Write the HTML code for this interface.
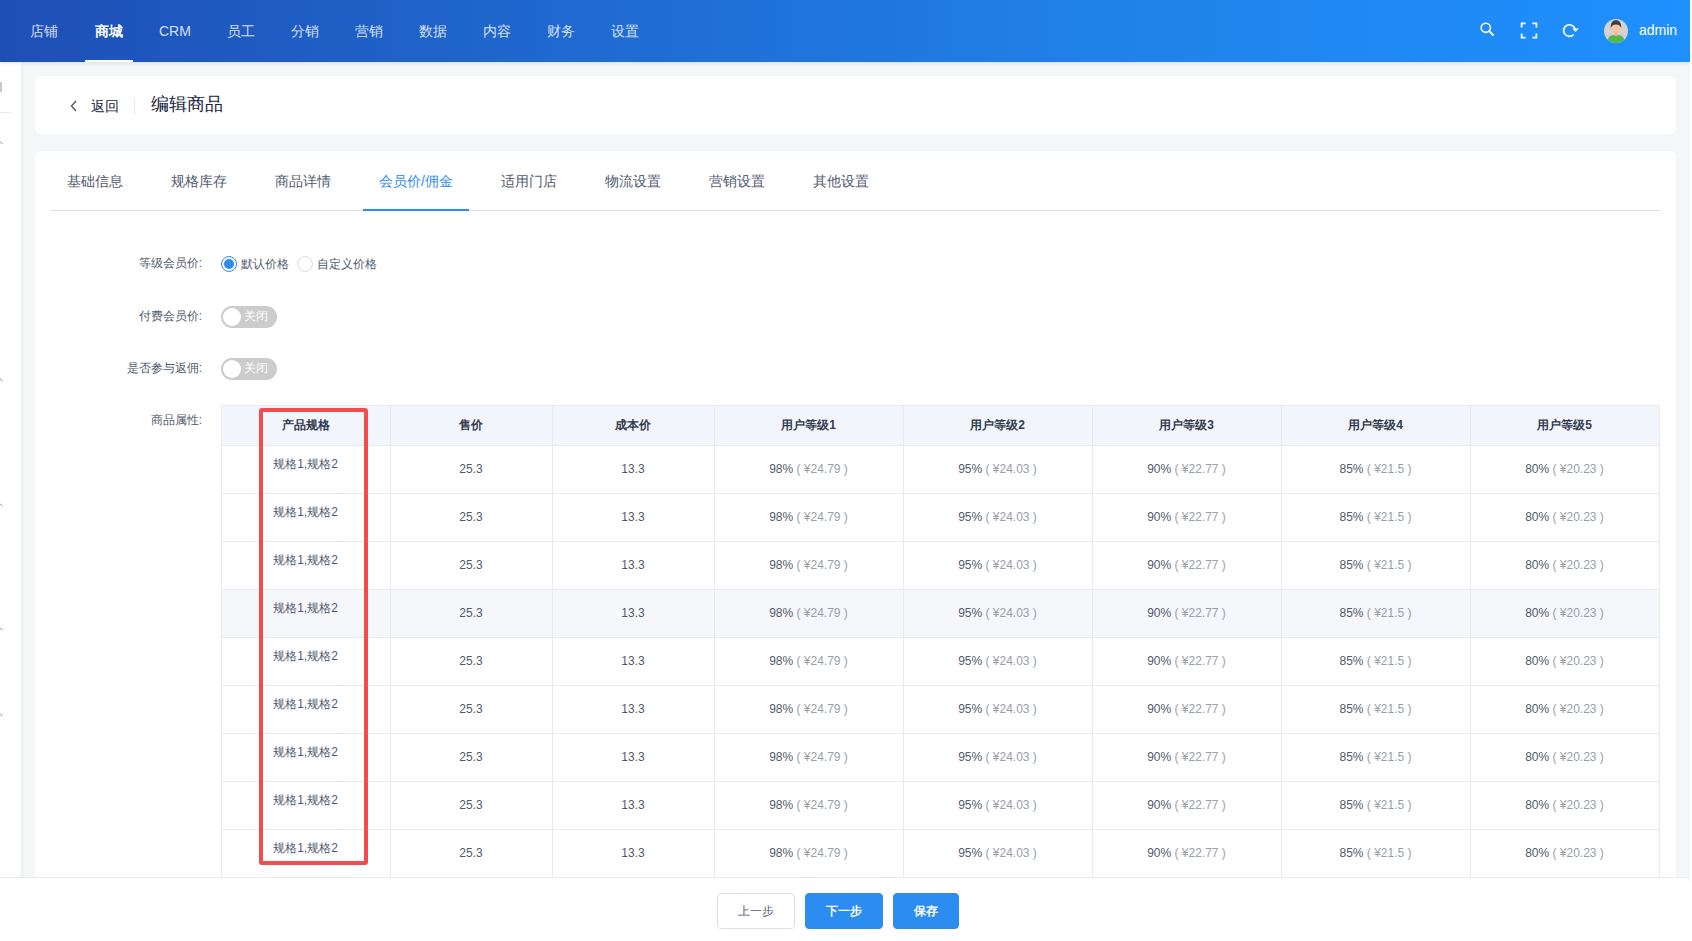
<!DOCTYPE html>
<html><head><meta charset="utf-8">
<style>
*{box-sizing:border-box;margin:0;padding:0}
html,body{width:1692px;height:941px;overflow:hidden;background:#fff;font-family:"Liberation Sans",sans-serif;color:#515a6e}
.abs{position:absolute}
#page{position:absolute;left:0;top:0;width:1690px;height:941px;background:#f5f6f8;overflow:hidden}
#hdr{position:absolute;left:0;top:0;width:1690px;height:62px;background:linear-gradient(90deg,#1e4fb6 0%,#2082e9 66%,#1e90ff 100%);box-shadow:0 1px 4px rgba(0,21,41,.12)}
.nav{position:absolute;top:0;height:62px;line-height:62px;font-size:14px;color:rgba(255,255,255,.82)}
.nav.on{color:#fff;font-weight:bold}
#uline{position:absolute;left:85px;top:60px;width:48px;height:2px;background:#fff}
#side{position:absolute;left:0;top:62px;width:21px;height:879px;background:#fff;box-shadow:1px 0 4px rgba(0,21,41,.06)}
.card{position:absolute;background:#fff;border-radius:6px}
#footer{position:absolute;left:0;top:877px;width:1690px;height:64px;background:#fff;border-top:1px solid #e8eaec;border-top-right-radius:6px}
.btn{position:absolute;top:893px;height:36px;line-height:34px;font-size:12px;font-weight:bold;text-align:center;border-radius:4px;border:1px solid #2d8cf0;background:#2d8cf0;color:#fff}
.btn.def{background:#fff;border-color:#dcdee2;color:#515a6e;font-weight:normal}
.tab{position:absolute;top:151px;height:60px;line-height:60px;font-size:14px;color:#515a6e}
.tab.on{color:#2d8cf0}
.lbl{position:absolute;font-size:12px;color:#515a6e;text-align:right;width:200px;left:2px}
.thead{background:#f2f6fc}
.hov{background:#f5f7fa}
.hl{height:1px;background:#e8eaf0}
.vl{width:1px;background:#e8eaf0}
.th{height:40px;line-height:40px;text-align:center;font-size:12px;font-weight:bold;color:#333a4d}
.td{height:48px;line-height:48px;text-align:center;font-size:12px;color:#515a6e;white-space:nowrap}
.td.sku{line-height:39px}
.g{color:#9a9ea8}
.sw{position:absolute;left:221px;width:56px;height:22px;border-radius:11px;background:#ccc}
.sw:after{content:"";position:absolute;left:2px;top:2px;width:18px;height:18px;border-radius:50%;background:#fff}
.sw span{position:absolute;left:23px;top:-1px;line-height:22px;font-size:12px;color:#fff}
</style></head><body>
<div id="page">
  <div id="side">
    <div class="abs" style="left:0;top:20px;width:2px;height:10px;background:#c5c8ce"></div>
    <div class="abs" style="left:0;top:50px;width:11px;height:1px;background:#e8eaec"></div>
<svg class="abs" style="left:0;top:79px" width="4" height="4" viewBox="0 0 4 4"><path d="M0 0.8L2.6 3" stroke="#a9b4c8" stroke-width="1.1" fill="none"/></svg><svg class="abs" style="left:0;top:316px" width="4" height="4" viewBox="0 0 4 4"><path d="M0 0.8L2.6 3" stroke="#a9b4c8" stroke-width="1.1" fill="none"/></svg><svg class="abs" style="left:0;top:441px" width="4" height="4" viewBox="0 0 4 4"><path d="M0 0.8L2.6 3" stroke="#a9b4c8" stroke-width="1.1" fill="none"/></svg><svg class="abs" style="left:0;top:565px" width="4" height="4" viewBox="0 0 4 4"><path d="M0 0.8L2.6 3" stroke="#a9b4c8" stroke-width="1.1" fill="none"/></svg><svg class="abs" style="left:0;top:651px" width="4" height="4" viewBox="0 0 4 4"><path d="M0 0.8L2.6 3" stroke="#a9b4c8" stroke-width="1.1" fill="none"/></svg>
  </div>
  <div id="hdr">
    <div class="nav" style="left:30px">店铺</div>
    <div class="nav on" style="left:95px">商城</div>
    <div class="nav" style="left:159px">CRM</div>
    <div class="nav" style="left:227px">员工</div>
    <div class="nav" style="left:291px">分销</div>
    <div class="nav" style="left:355px">营销</div>
    <div class="nav" style="left:419px">数据</div>
    <div class="nav" style="left:483px">内容</div>
    <div class="nav" style="left:547px">财务</div>
    <div class="nav" style="left:611px">设置</div>
    <div id="uline"></div>
    <div class="abs" style="left:1480px;top:22px;width:14px;height:14px">
      <svg width="14" height="14" viewBox="0 0 14 14"><circle cx="5.8" cy="5.8" r="4.6" fill="none" stroke="#fff" stroke-width="1.6"/><path d="M9.2 9.2 L13 13" stroke="#fff" stroke-width="1.8" stroke-linecap="round"/></svg>
    </div>
    <div class="abs" style="left:1520px;top:22px;width:18px;height:17px">
      <svg width="18" height="17" viewBox="0 0 18 17" fill="none" stroke="#fff" stroke-width="1.7"><path d="M1.6 5.5V1.3H5.6M12.4 1.3H16.4V5.5M16.4 11.6V15.7H12.4M5.6 15.7H1.6V11.6"/></svg>
    </div>
    <div class="abs" style="left:1562px;top:22px;width:18px;height:17px">
      <svg width="18" height="17" viewBox="0 0 18 17"><path d="M11.6 12.6A5.8 5.8 0 1 1 13.1 7.3" fill="none" stroke="#fff" stroke-width="1.7"/><path d="M10.4 6.6H16.7L13.5 10.1Z" fill="#fff"/></svg>
    </div>
    <div class="abs" style="left:1604px;top:19px;width:24px;height:24px;border-radius:50%;background:#d3d3d3;overflow:hidden">
      <svg width="24" height="24" viewBox="0 0 24 24"><ellipse cx="12" cy="21" rx="8.2" ry="5.5" fill="#52b848"/><rect x="10.2" y="12.5" width="3.6" height="4.5" fill="#f1ae8e"/><ellipse cx="12" cy="9.2" rx="4.6" ry="5.2" fill="#f9c4a6"/><path d="M6.8 9.2C6.3 3.8 8.8 1.2 12 1.2S17.7 3.8 17.2 9.2C16.6 7 15 5.4 12 5.4S7.4 7 6.8 9.2Z" fill="#3d3d40"/></svg>
    </div>
    <div class="nav" style="left:1639px;top:-1px;color:#fff;font-size:14px">admin</div>
  </div>
  <div class="card" style="left:35px;top:76px;width:1641px;height:58px">
    <svg class="abs" style="left:34px;top:24px" width="9" height="12" viewBox="0 0 9 12"><path d="M7 1L2.5 6L7 11" fill="none" stroke="#515a6e" stroke-width="1.4"/></svg>
    <div class="abs" style="left:56px;top:20px;line-height:20px;font-size:14px;color:#17233d">返回</div>
    <div class="abs" style="left:99px;top:22px;width:1px;height:16px;background:#e8eaec"></div>
    <div class="abs" style="left:116px;top:16px;line-height:24px;font-size:18px;color:#17233d">编辑商品</div>
  </div>
  <div class="card" style="left:35px;top:151px;width:1641px;height:800px">
    <div class="abs" style="left:16px;top:59px;width:1609px;height:1px;background:#dcdee2"></div>
    <div class="abs" style="left:328px;top:58px;width:106px;height:2px;background:#2d8cf0"></div>
  </div>
  <div class="tab" style="left:67px">基础信息</div>
  <div class="tab" style="left:171px">规格库存</div>
  <div class="tab" style="left:275px">商品详情</div>
  <div class="tab on" style="left:379px">会员价/佣金</div>
  <div class="tab" style="left:501px">适用门店</div>
  <div class="tab" style="left:605px">物流设置</div>
  <div class="tab" style="left:709px">营销设置</div>
  <div class="tab" style="left:813px">其他设置</div>

  <div class="lbl" style="top:254px;line-height:18px">等级会员价:</div>
  <div class="abs" style="left:221px;top:256px;width:16px;height:16px;border-radius:50%;border:1px solid #2d8cf0"><div class="abs" style="left:2px;top:2px;width:10px;height:10px;border-radius:50%;background:#2d8cf0"></div></div>
  <div class="abs" style="left:241px;top:255px;line-height:18px;font-size:12px;color:#515a6e">默认价格</div>
  <div class="abs" style="left:297px;top:256px;width:16px;height:16px;border-radius:50%;border:1px solid #dcdee2"></div>
  <div class="abs" style="left:317px;top:255px;line-height:18px;font-size:12px;color:#515a6e">自定义价格</div>

  <div class="lbl" style="top:307px;line-height:18px">付费会员价:</div>
  <div class="sw" style="top:306px"><span>关闭</span></div>
  <div class="lbl" style="top:359px;line-height:18px">是否参与返佣:</div>
  <div class="sw" style="top:358px"><span>关闭</span></div>
  <div class="lbl" style="top:411px;line-height:18px">商品属性:</div>

<div id="tbl" class="abs" style="left:221px;top:405px;width:1438px;height:536px">
<div class="abs thead" style="left:0;top:0;width:1438px;height:41px"></div>
<div class="abs hov" style="left:0;top:184px;width:1438px;height:48px"></div>
<div class="abs hl" style="left:0;top:0px;width:1438px"></div>
<div class="abs hl" style="left:0;top:40px;width:1438px"></div>
<div class="abs hl" style="left:0;top:88px;width:1438px"></div>
<div class="abs hl" style="left:0;top:136px;width:1438px"></div>
<div class="abs hl" style="left:0;top:184px;width:1438px"></div>
<div class="abs hl" style="left:0;top:232px;width:1438px"></div>
<div class="abs hl" style="left:0;top:280px;width:1438px"></div>
<div class="abs hl" style="left:0;top:328px;width:1438px"></div>
<div class="abs hl" style="left:0;top:376px;width:1438px"></div>
<div class="abs hl" style="left:0;top:424px;width:1438px"></div>
<div class="abs hl" style="left:0;top:472px;width:1438px"></div>
<div class="abs hl" style="left:0;top:520px;width:1438px"></div>
<div class="abs vl" style="left:0px;top:0;height:536px"></div>
<div class="abs vl" style="left:169px;top:0;height:536px"></div>
<div class="abs vl" style="left:331px;top:0;height:536px"></div>
<div class="abs vl" style="left:493px;top:0;height:536px"></div>
<div class="abs vl" style="left:682px;top:0;height:536px"></div>
<div class="abs vl" style="left:871px;top:0;height:536px"></div>
<div class="abs vl" style="left:1060px;top:0;height:536px"></div>
<div class="abs vl" style="left:1249px;top:0;height:536px"></div>
<div class="abs vl" style="left:1438px;top:0;height:536px"></div>
<div class="abs th" style="left:0px;top:0;width:169px">产品规格</div>
<div class="abs th" style="left:169px;top:0;width:162px">售价</div>
<div class="abs th" style="left:331px;top:0;width:162px">成本价</div>
<div class="abs th" style="left:493px;top:0;width:189px">用户等级1</div>
<div class="abs th" style="left:682px;top:0;width:189px">用户等级2</div>
<div class="abs th" style="left:871px;top:0;width:189px">用户等级3</div>
<div class="abs th" style="left:1060px;top:0;width:189px">用户等级4</div>
<div class="abs th" style="left:1249px;top:0;width:189px">用户等级5</div>
<div class="abs td sku" style="left:0;top:40px;width:169px">规格1,规格2</div>
<div class="abs td" style="left:169px;top:40px;width:162px">25.3</div>
<div class="abs td" style="left:331px;top:40px;width:162px">13.3</div>
<div class="abs td" style="left:493px;top:40px;width:189px">98%<span class="g"> ( ¥24.79 )</span></div>
<div class="abs td" style="left:682px;top:40px;width:189px">95%<span class="g"> ( ¥24.03 )</span></div>
<div class="abs td" style="left:871px;top:40px;width:189px">90%<span class="g"> ( ¥22.77 )</span></div>
<div class="abs td" style="left:1060px;top:40px;width:189px">85%<span class="g"> ( ¥21.5 )</span></div>
<div class="abs td" style="left:1249px;top:40px;width:189px">80%<span class="g"> ( ¥20.23 )</span></div>
<div class="abs td sku" style="left:0;top:88px;width:169px">规格1,规格2</div>
<div class="abs td" style="left:169px;top:88px;width:162px">25.3</div>
<div class="abs td" style="left:331px;top:88px;width:162px">13.3</div>
<div class="abs td" style="left:493px;top:88px;width:189px">98%<span class="g"> ( ¥24.79 )</span></div>
<div class="abs td" style="left:682px;top:88px;width:189px">95%<span class="g"> ( ¥24.03 )</span></div>
<div class="abs td" style="left:871px;top:88px;width:189px">90%<span class="g"> ( ¥22.77 )</span></div>
<div class="abs td" style="left:1060px;top:88px;width:189px">85%<span class="g"> ( ¥21.5 )</span></div>
<div class="abs td" style="left:1249px;top:88px;width:189px">80%<span class="g"> ( ¥20.23 )</span></div>
<div class="abs td sku" style="left:0;top:136px;width:169px">规格1,规格2</div>
<div class="abs td" style="left:169px;top:136px;width:162px">25.3</div>
<div class="abs td" style="left:331px;top:136px;width:162px">13.3</div>
<div class="abs td" style="left:493px;top:136px;width:189px">98%<span class="g"> ( ¥24.79 )</span></div>
<div class="abs td" style="left:682px;top:136px;width:189px">95%<span class="g"> ( ¥24.03 )</span></div>
<div class="abs td" style="left:871px;top:136px;width:189px">90%<span class="g"> ( ¥22.77 )</span></div>
<div class="abs td" style="left:1060px;top:136px;width:189px">85%<span class="g"> ( ¥21.5 )</span></div>
<div class="abs td" style="left:1249px;top:136px;width:189px">80%<span class="g"> ( ¥20.23 )</span></div>
<div class="abs td sku" style="left:0;top:184px;width:169px">规格1,规格2</div>
<div class="abs td" style="left:169px;top:184px;width:162px">25.3</div>
<div class="abs td" style="left:331px;top:184px;width:162px">13.3</div>
<div class="abs td" style="left:493px;top:184px;width:189px">98%<span class="g"> ( ¥24.79 )</span></div>
<div class="abs td" style="left:682px;top:184px;width:189px">95%<span class="g"> ( ¥24.03 )</span></div>
<div class="abs td" style="left:871px;top:184px;width:189px">90%<span class="g"> ( ¥22.77 )</span></div>
<div class="abs td" style="left:1060px;top:184px;width:189px">85%<span class="g"> ( ¥21.5 )</span></div>
<div class="abs td" style="left:1249px;top:184px;width:189px">80%<span class="g"> ( ¥20.23 )</span></div>
<div class="abs td sku" style="left:0;top:232px;width:169px">规格1,规格2</div>
<div class="abs td" style="left:169px;top:232px;width:162px">25.3</div>
<div class="abs td" style="left:331px;top:232px;width:162px">13.3</div>
<div class="abs td" style="left:493px;top:232px;width:189px">98%<span class="g"> ( ¥24.79 )</span></div>
<div class="abs td" style="left:682px;top:232px;width:189px">95%<span class="g"> ( ¥24.03 )</span></div>
<div class="abs td" style="left:871px;top:232px;width:189px">90%<span class="g"> ( ¥22.77 )</span></div>
<div class="abs td" style="left:1060px;top:232px;width:189px">85%<span class="g"> ( ¥21.5 )</span></div>
<div class="abs td" style="left:1249px;top:232px;width:189px">80%<span class="g"> ( ¥20.23 )</span></div>
<div class="abs td sku" style="left:0;top:280px;width:169px">规格1,规格2</div>
<div class="abs td" style="left:169px;top:280px;width:162px">25.3</div>
<div class="abs td" style="left:331px;top:280px;width:162px">13.3</div>
<div class="abs td" style="left:493px;top:280px;width:189px">98%<span class="g"> ( ¥24.79 )</span></div>
<div class="abs td" style="left:682px;top:280px;width:189px">95%<span class="g"> ( ¥24.03 )</span></div>
<div class="abs td" style="left:871px;top:280px;width:189px">90%<span class="g"> ( ¥22.77 )</span></div>
<div class="abs td" style="left:1060px;top:280px;width:189px">85%<span class="g"> ( ¥21.5 )</span></div>
<div class="abs td" style="left:1249px;top:280px;width:189px">80%<span class="g"> ( ¥20.23 )</span></div>
<div class="abs td sku" style="left:0;top:328px;width:169px">规格1,规格2</div>
<div class="abs td" style="left:169px;top:328px;width:162px">25.3</div>
<div class="abs td" style="left:331px;top:328px;width:162px">13.3</div>
<div class="abs td" style="left:493px;top:328px;width:189px">98%<span class="g"> ( ¥24.79 )</span></div>
<div class="abs td" style="left:682px;top:328px;width:189px">95%<span class="g"> ( ¥24.03 )</span></div>
<div class="abs td" style="left:871px;top:328px;width:189px">90%<span class="g"> ( ¥22.77 )</span></div>
<div class="abs td" style="left:1060px;top:328px;width:189px">85%<span class="g"> ( ¥21.5 )</span></div>
<div class="abs td" style="left:1249px;top:328px;width:189px">80%<span class="g"> ( ¥20.23 )</span></div>
<div class="abs td sku" style="left:0;top:376px;width:169px">规格1,规格2</div>
<div class="abs td" style="left:169px;top:376px;width:162px">25.3</div>
<div class="abs td" style="left:331px;top:376px;width:162px">13.3</div>
<div class="abs td" style="left:493px;top:376px;width:189px">98%<span class="g"> ( ¥24.79 )</span></div>
<div class="abs td" style="left:682px;top:376px;width:189px">95%<span class="g"> ( ¥24.03 )</span></div>
<div class="abs td" style="left:871px;top:376px;width:189px">90%<span class="g"> ( ¥22.77 )</span></div>
<div class="abs td" style="left:1060px;top:376px;width:189px">85%<span class="g"> ( ¥21.5 )</span></div>
<div class="abs td" style="left:1249px;top:376px;width:189px">80%<span class="g"> ( ¥20.23 )</span></div>
<div class="abs td sku" style="left:0;top:424px;width:169px">规格1,规格2</div>
<div class="abs td" style="left:169px;top:424px;width:162px">25.3</div>
<div class="abs td" style="left:331px;top:424px;width:162px">13.3</div>
<div class="abs td" style="left:493px;top:424px;width:189px">98%<span class="g"> ( ¥24.79 )</span></div>
<div class="abs td" style="left:682px;top:424px;width:189px">95%<span class="g"> ( ¥24.03 )</span></div>
<div class="abs td" style="left:871px;top:424px;width:189px">90%<span class="g"> ( ¥22.77 )</span></div>
<div class="abs td" style="left:1060px;top:424px;width:189px">85%<span class="g"> ( ¥21.5 )</span></div>
<div class="abs td" style="left:1249px;top:424px;width:189px">80%<span class="g"> ( ¥20.23 )</span></div>
<div class="abs td sku" style="left:0;top:472px;width:169px">规格1,规格2</div>
<div class="abs td" style="left:169px;top:472px;width:162px">25.3</div>
<div class="abs td" style="left:331px;top:472px;width:162px">13.3</div>
<div class="abs td" style="left:493px;top:472px;width:189px">98%<span class="g"> ( ¥24.79 )</span></div>
<div class="abs td" style="left:682px;top:472px;width:189px">95%<span class="g"> ( ¥24.03 )</span></div>
<div class="abs td" style="left:871px;top:472px;width:189px">90%<span class="g"> ( ¥22.77 )</span></div>
<div class="abs td" style="left:1060px;top:472px;width:189px">85%<span class="g"> ( ¥21.5 )</span></div>
<div class="abs td" style="left:1249px;top:472px;width:189px">80%<span class="g"> ( ¥20.23 )</span></div>
</div>

  <div class="abs" style="left:259px;top:408px;width:109px;height:457px;border:4px solid #f44c4c;border-radius:3px"></div>

  <div id="footer"></div>
  <div class="btn def" style="left:717px;width:78px">上一步</div>
  <div class="btn" style="left:805px;width:78px">下一步</div>
  <div class="btn" style="left:893px;width:66px">保存</div>
</div>
</body></html>
